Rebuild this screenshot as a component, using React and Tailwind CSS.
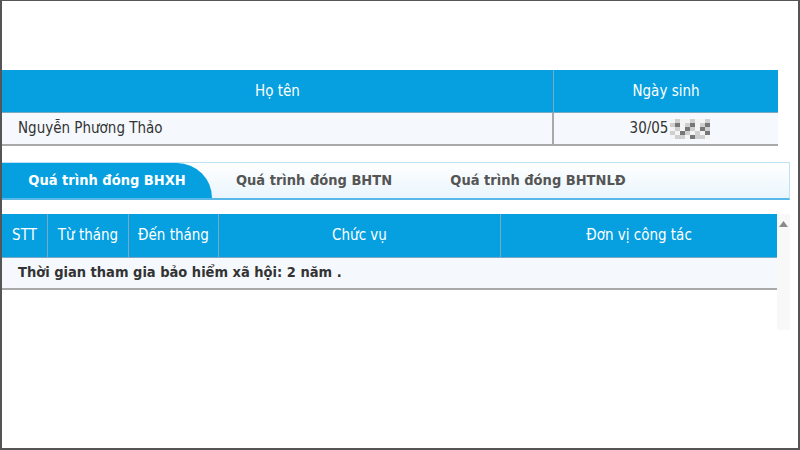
import { Fragment } from 'react';

const font = { fontFamily: '"DejaVu Sans Condensed", "DejaVu Sans", Verdana, sans-serif' };

const columns = [
  { label: 'STT', w: 'w-[46px]' },
  { label: 'Từ tháng', w: 'w-[81px]' },
  { label: 'Đến tháng', w: 'w-[90px]' },
  { label: 'Chức vụ', w: 'w-[282px]' },
  { label: 'Đơn vị công tác', w: 'flex-1' },
];

const mosaic = [
  [0, 1, 0, 0, 1, 0, 0, 1],
  [1, 2, 0, 1, 2, 0, 1, 2],
  [0, 1, 0, 2, 1, 0, 2, 1],
  [1, 0, 2, 1, 0, 1, 0, 2],
  [0, 1, 1, 0, 2, 1, 1, 0],
];
const shades = ['#f4f4f4', '#cfcfcf', '#777777'];

function Blurred() {
  return (
    <svg width="40" height="20" viewBox="0 0 40 20" className="inline-block">
      {mosaic.map((row, y) =>
        row.map((v, x) => (
          <rect key={`${x}-${y}`} x={x * 5} y={y * 4} width="5" height="4" fill={shades[v]} />
        ))
      )}
    </svg>
  );
}

function TabBar() {
  return (
    <div className="mt-4 flex h-[38px] w-[788px] border-b-2 border-r border-t border-[#bfe3f5] border-b-[#5ab8e8] bg-gradient-to-b from-white to-[#e9f5fc]">
      <div className="flex w-[210px] items-center justify-center rounded-tr-[36px] bg-[#069fe0] text-[14.5px] font-bold text-white">
        Quá trình đóng BHXH
      </div>
      <div className="flex w-[204px] items-center justify-center text-[14.5px] font-bold text-[#555]">
        Quá trình đóng BHTN
      </div>
      <div className="flex w-[244px] items-center justify-center text-[14.5px] font-bold text-[#555]">
        Quá trình đóng BHTNLĐ
      </div>
    </div>
  );
}

export default function App() {
  return (
    <div className="h-[450px] w-[800px] overflow-hidden border-2 border-t border-[#555] bg-white text-[#333]" style={font}>
      <div className="mt-[69px] w-[776px]">
        <div className="flex h-[42px] bg-[#069fe0] text-[15px] text-white">
          <div className="flex flex-1 items-center justify-center border-r border-[#7aa9c4]">Họ tên</div>
          <div className="flex w-[224px] items-center justify-center">Ngày sinh</div>
        </div>
        <div className="flex h-[34px] border-b-2 border-t border-[#a9a9a9] border-t-[#7aa9c4] bg-[#f5f9fd] text-[15px]">
          <div className="flex flex-1 items-center border-r-2 border-[#a9a9a9] pl-4">Nguyễn Phương Thảo</div>
          <div className="flex w-[224px] items-center justify-center gap-0.5 pl-2">
            <span>30/05</span>
            <Blurred />
          </div>
        </div>
      </div>

      <TabBar />

      <div className="mt-[14px] flex w-[788px]">
        <div className="w-[775px]">
          <div className="flex h-[43px] bg-[#069fe0] text-[15px] text-white">
            {columns.map((c, i) => (
              <Fragment key={c.label}>
                <div
                  className={`flex ${c.w} items-center justify-center ${i < columns.length - 1 ? 'border-r border-[#7aa9c4]' : ''}`}
                >
                  {c.label}
                </div>
              </Fragment>
            ))}
          </div>
          <div className="flex h-[33px] items-center border-b-2 border-t border-[#a9a9a9] border-t-[#7aa9c4] bg-[#f5f9fd] pl-4 text-[14.5px] font-bold">
            Thời gian tham gia bảo hiểm xã hội: 2 năm .
          </div>
        </div>
        <div className="flex h-[116px] w-[13px] justify-center bg-[#f8f8f8] pt-[7px]">
          <svg width="9" height="6" viewBox="0 0 9 6">
            <path d="M4.5 0 L9 6 L0 6 Z" fill="#8a8a8a" />
          </svg>
        </div>
      </div>
    </div>
  );
}
